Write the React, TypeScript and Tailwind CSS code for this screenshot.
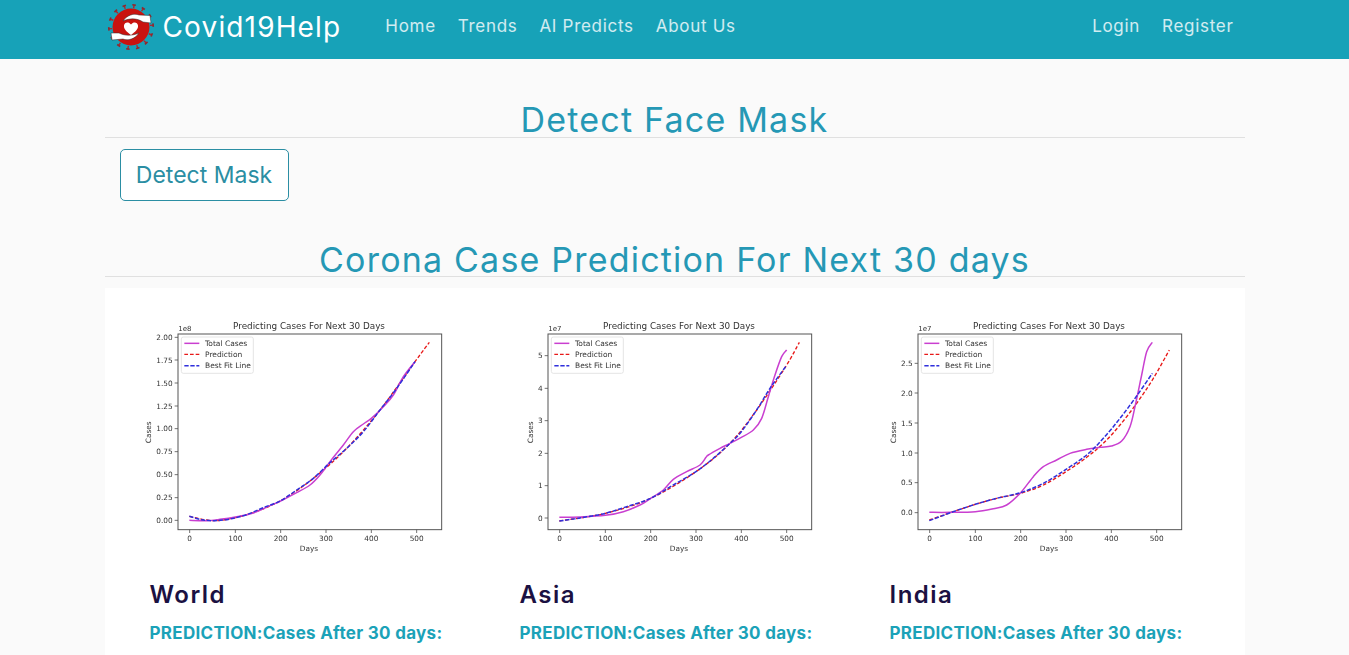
import React from 'react';

type Pt = [number, number];

// smooth line through the points read off the chart
function smooth(p: Pt[]) {
  let d = `M${p[0][0]},${p[0][1]}`;
  for (let i = 0; i < p.length - 1; i++) {
    const a = p[Math.max(i - 1, 0)];
    const b = p[i];
    const c = p[i + 1];
    const e = p[Math.min(i + 2, p.length - 1)];
    d += ` C${b[0] + (c[0] - a[0]) / 6},${b[1] + (c[1] - a[1]) / 6} ${c[0] - (e[0] - b[0]) / 6},${c[1] - (e[1] - b[1]) / 6} ${c[0]},${c[1]}`;
  }
  return d;
}

interface ChartData {
  name: string;
  exp: string;
  casesX: number;
  yTicks: [string, number][];
  total: Pt[];
  best: Pt[];
  pred: Pt[];
}

const xTicks: [string, number][] = [['0', 179], ['100', 316], ['200', 452], ['300', 588], ['400', 724], ['500', 860]];

const charts: ChartData[] = [
  {
    name: 'World',
    exp: '1e8',
    casesX: 64,
    yTicks: [['2.00', 82], ['1.75', 150], ['1.50', 219], ['1.25', 288], ['1.00', 356], ['0.75', 425], ['0.50', 494], ['0.25', 563], ['0.00', 631]],
    total: [[178, 631], [230, 632], [270, 628], [316, 621], [370, 609], [420, 587], [452, 573], [500, 548], [540, 525], [570, 495], [600, 455], [640, 405], [670, 365], [700, 342], [724, 325], [760, 290], [790, 255], [820, 200], [855, 155]],
    best: [[178, 619], [215, 629], [255, 632], [300, 627], [350, 614], [400, 593], [452, 572], [500, 540], [550, 505], [600, 458], [650, 415], [700, 365], [750, 300], [800, 235], [855, 155]],
    pred: [[178, 619], [255, 632], [350, 614], [452, 572], [550, 505], [650, 415], [750, 300], [855, 155], [898, 97]],
  },
  {
    name: 'Asia',
    exp: '1e7',
    casesX: 99,
    yTicks: [['5', 137], ['4', 235], ['3', 332], ['2', 430], ['1', 527], ['0', 624]],
    total: [[178, 622], [240, 621], [316, 616], [370, 605], [420, 585], [452, 565], [490, 540], [520, 508], [560, 485], [600, 465], [618, 442], [625, 435], [660, 415], [690, 400], [724, 382], [760, 360], [785, 325], [805, 260], [825, 195], [845, 140], [860, 120]],
    best: [[178, 633], [240, 624], [316, 610], [380, 590], [452, 565], [520, 525], [588, 485], [640, 445], [690, 400], [724, 365], [770, 300], [810, 235], [857, 170]],
    pred: [[178, 633], [316, 610], [452, 565], [588, 485], [690, 400], [770, 300], [857, 170], [898, 97]],
  },
  {
    name: 'India',
    exp: '1e7',
    casesX: 77,
    yTicks: [['2.5', 160], ['2.0', 249], ['1.5', 339], ['1.0', 429], ['0.5', 518], ['0.0', 608]],
    total: [[178, 607], [240, 607], [316, 605], [370, 596], [410, 585], [452, 548], [490, 500], [520, 470], [560, 450], [600, 430], [650, 418], [690, 412], [724, 408], [755, 393], [780, 350], [795, 290], [815, 195], [830, 125], [847, 97]],
    best: [[178, 632], [250, 605], [316, 583], [380, 565], [452, 548], [520, 520], [588, 478], [650, 435], [700, 385], [750, 325], [800, 258], [847, 190]],
    pred: [[178, 630], [250, 605], [316, 583], [380, 565], [452, 550], [520, 525], [588, 485], [650, 442], [700, 400], [750, 345], [800, 280], [850, 205], [898, 120]],
  },
];

function Chart({ data }: { data: ChartData }) {
  return (
    <svg viewBox="0 0 990 750" className="w-[330px] h-[250px] blur-[0.4px]" fontFamily="'DejaVu Sans', sans-serif" fill="#333">
      <text x="537" y="56" fontSize="26.5" textAnchor="middle">Predicting Cases For Next 30 Days</text>
      <text x="145" y="64" fontSize="21">{data.exp}</text>
      <path d={smooth(data.pred)} fill="none" stroke="#e81818" strokeWidth="4" strokeDasharray="11 6" />
      <path d={smooth(data.total)} fill="none" stroke="#c93fd0" strokeWidth="4.5" />
      <path d={smooth(data.best)} fill="none" stroke="#2f2fdc" strokeWidth="4.5" strokeDasharray="13 5" />
      <rect x="144" y="72" width="791" height="587" fill="none" stroke="#555" strokeWidth="3" />
      {data.yTicks.map(([label, y]) => (
        <g key={label}>
          <line x1="134" x2="144" y1={y} y2={y} stroke="#555" strokeWidth="2.5" />
          <text x="128" y={y + 8} fontSize="22" textAnchor="end">{label}</text>
        </g>
      ))}
      {xTicks.map(([label, x]) => (
        <g key={label}>
          <line x1={x} x2={x} y1="659" y2="669" stroke="#555" strokeWidth="2.5" />
          <text x={x} y="692" fontSize="22" textAnchor="middle">{label}</text>
        </g>
      ))}
      <text x="537" y="723" fontSize="22" textAnchor="middle">Days</text>
      <text x={data.casesX} y="367" fontSize="22" textAnchor="middle" transform={`rotate(-90 ${data.casesX} 367)`}>Cases</text>
      <rect x="154" y="81" width="216" height="109" rx="6" fill="#fff" stroke="#d8d8d8" strokeWidth="2" />
      <line x1="163" x2="208" y1="100" y2="100" stroke="#c93fd0" strokeWidth="4.5" />
      <line x1="163" x2="208" y1="133" y2="133" stroke="#e81818" strokeWidth="4" strokeDasharray="11 6" />
      <line x1="163" x2="208" y1="167" y2="167" stroke="#2f2fdc" strokeWidth="4.5" strokeDasharray="13 5" />
      <text x="225" y="108" fontSize="22.5">Total Cases</text>
      <text x="225" y="141" fontSize="22.5">Prediction</text>
      <text x="225" y="175" fontSize="22.5">Best Fit Line</text>
    </svg>
  );
}

function Logo() {
  const spikes = Array.from({ length: 14 }, (_, i) => (i * 360) / 14 + 8);
  return (
    <svg viewBox="0 0 50 50" className="w-[50px] h-[50px] -ml-[1px] shrink-0">
      {spikes.map((a) => (
        <g key={a} transform={`rotate(${a} 25 25)`}>
          <line x1="25" y1="6" x2="25" y2="2.5" stroke="#b3232a" strokeWidth="1.4" />
          <line x1="23.2" y1="2.8" x2="26.8" y2="2.8" stroke="#8d2a30" strokeWidth="1.6" />
        </g>
      ))}
      <circle cx="25" cy="25" r="18.5" fill="#c9130f" />
      <path d="M17 19 C21 13 28 11 33 13 L44 13.5 L45 21 L37 20 C31 16 24 16 17 19Z" fill="#fff" stroke="#2b2b2b" strokeWidth="0.5" />
      <path d="M33 31 C29 37 22 39 17 37 L6 38 L5 31 L13 31 C19 34 26 34 33 31Z" fill="#fff" stroke="#2b2b2b" strokeWidth="0.5" />
      <path d="M25 33 C20.5 29.5 17.5 27 18 23.5 C18.5 20 22.8 19.6 25 22.6 C27.2 19.6 31.5 20 32 23.5 C32.5 27 29.5 29.5 25 33Z" fill="#fff" />
    </svg>
  );
}

export default function App() {
  return (
    <div className="h-screen overflow-hidden bg-[#fafafa] font-['Inter',sans-serif]">
      <nav className="h-[59px] bg-[#17a2b8]">
        <div className="w-[1140px] mx-auto flex items-center h-full pb-[5px] pl-[2px] pr-[11px]">
          <Logo />
          <span className="ml-[7px] text-[28px] tracking-[1.15px] text-white">Covid19Help</span>
          <div className="ml-[44px] flex gap-[22px] text-[17px] tracking-[0.7px] text-white/80">
            <span>Home</span>
            <span>Trends</span>
            <span>AI Predicts</span>
            <span>About Us</span>
          </div>
          <div className="ml-auto flex gap-[22px] text-[17px] tracking-[0.7px] text-white/80">
            <span>Login</span>
            <span>Register</span>
          </div>
        </div>
      </nav>

      <main className="w-[1140px] mx-auto">
        <h2 className="mt-[44px] text-center text-[34px] leading-[34px] tracking-[1.2px] text-[#2598b5] border-b border-[#e0e0e0]">
          Detect Face Mask
        </h2>
        <div className="pl-[15px] pt-[11px]">
          <button className="w-[169px] h-[52px] rounded-[5px] border border-[#2b8ea3] bg-white text-[23px] text-[#2b8ea3]">
            Detect Mask
          </button>
        </div>
        <h2 className="mt-[42px] text-center text-[34px] leading-[33px] tracking-[1.2px] text-[#2598b5] border-b border-[#e0e0e0]">
          Corona Case Prediction For Next 30 days
        </h2>
        <div className="mt-[11px] bg-white px-[15px] pt-[22px] pb-[40px] grid grid-cols-3">
          {charts.map((c) => (
            <div key={c.name} className="px-[10px]">
              <Chart data={c} />
              <div className="px-[20px]">
                <h4 className="mt-[20px] text-[24px] leading-[30px] font-semibold tracking-[1.5px] text-[#1b1142]">
                  {c.name}
                </h4>
                <p className="mt-[10px] text-[17px] leading-[26px] font-bold tracking-[0.3px] text-[#1ba2b8] whitespace-nowrap">
                  PREDICTION:Cases After 30 days:
                </p>
              </div>
            </div>
          ))}
        </div>
      </main>
    </div>
  );
}
